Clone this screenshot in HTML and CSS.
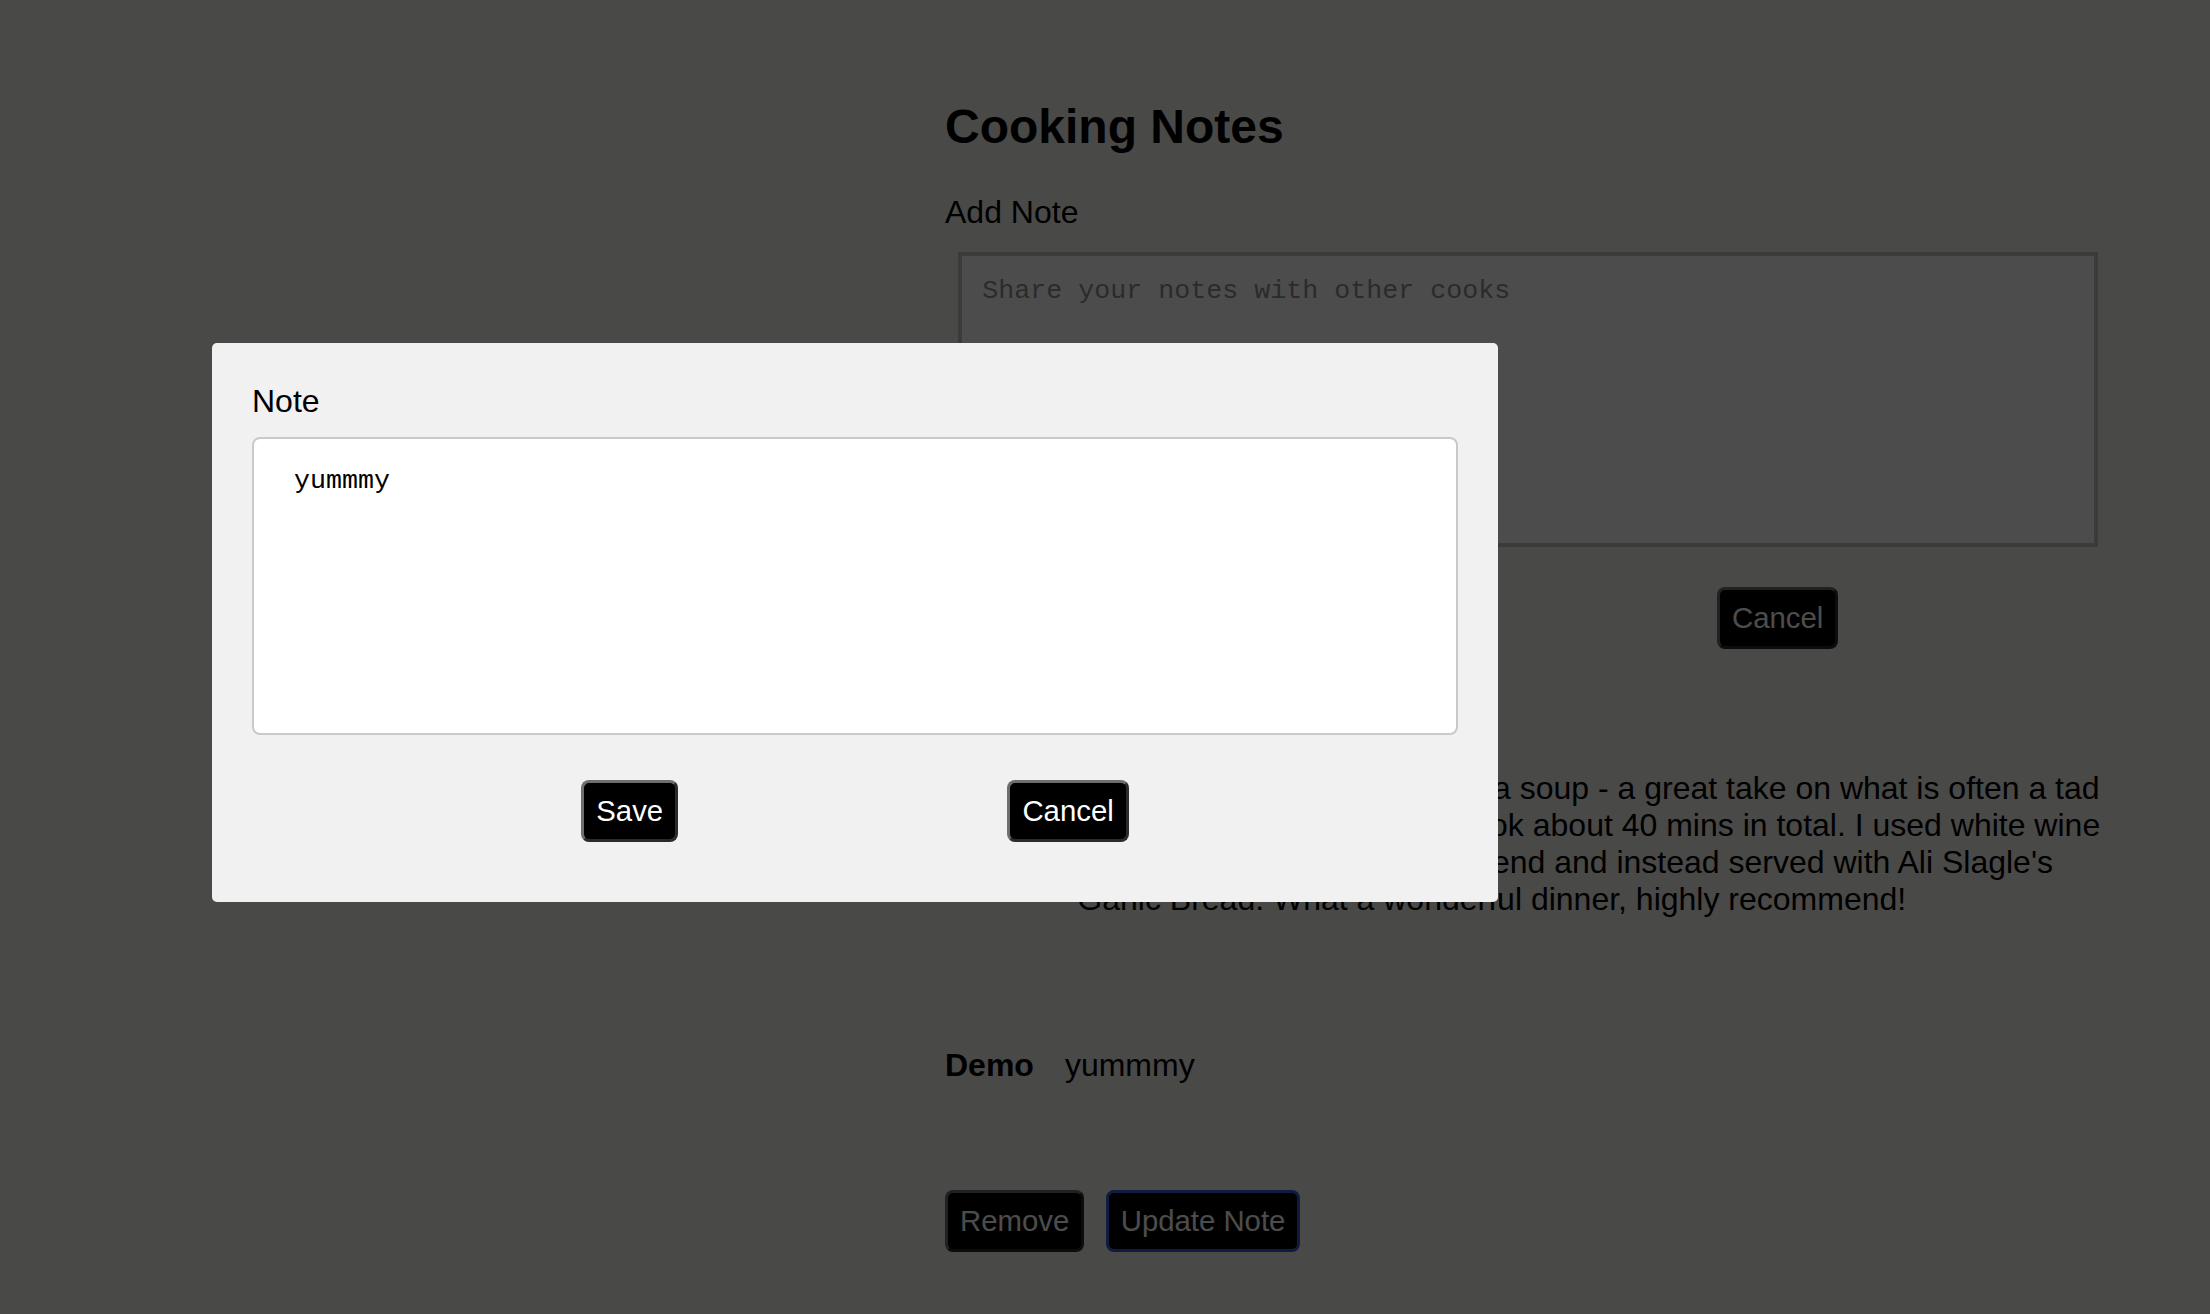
FILE: index.html
```html
<!DOCTYPE html>
<html lang="en">
<head>
<meta charset="utf-8">
<title>Cooking Notes</title>
<link rel="stylesheet" href="styles.css">
</head>
<body>
<div class="page">
  <aside class="side"></aside>
  <main class="notes">
    <h1 class="title">Cooking Notes</h1>
    <label class="add-label" for="new-note">Add Note</label>
    <textarea id="new-note" class="new-note" placeholder="Share your notes with other cooks"></textarea>
    <div class="form-actions">
      <button class="btn" type="button">Share your note</button>
      <button class="btn" type="button">Cancel</button>
    </div>
    <ul class="note-list">
      <li class="note note-first">
        <div class="note-body">
          <strong class="author">Megan</strong>
          <p class="note-text">We really enjoyed this lasagna soup - a great take on what is often a tad heavy dish. Prep and cook took about 40 mins in total. I used white wine and skipped the bread at the end and instead served with Ali Slagle's Garlic Bread. What a wonderful dinner, highly recommend!</p>
        </div>
      </li>
      <li class="note note-own">
        <div class="note-body">
          <strong class="author">Demo</strong>
          <p class="note-text">yummmy</p>
        </div>
        <div class="note-actions">
          <button class="btn" type="button">Remove</button>
          <button class="btn btn-focus" type="button">Update Note</button>
        </div>
      </li>
    </ul>
  </main>
</div>
<div class="overlay"></div>
<div class="modal" role="dialog" aria-label="Edit note">
  <label class="modal-label" for="edit-note">Note</label>
  <textarea id="edit-note" class="edit-note">yummmy</textarea>
  <div class="modal-actions">
    <button class="btn" type="button">Save</button>
    <button class="btn" type="button">Cancel</button>
  </div>
</div>
</body>
</html>
```

FILE: styles.css
```css
* {
  box-sizing: border-box;
}

html, body {
  margin: 0;
  padding: 0;
}

body {
  background: #f3f3f2;
  color: #000;
  font-family: "Liberation Sans", Arial, sans-serif;
  font-size: 32px;
  width: 2210px;
  height: 1314px;
  overflow: hidden;
}

.page {
  display: grid;
  grid-template-columns: 945px 1175px;
}

.notes {
  padding-top: 99.4px;
}

.title {
  margin: 0;
  font-size: 48px;
  font-weight: bold;
  line-height: 56px;
}

.add-label {
  display: block;
  margin-top: 38.5px;
  font-size: 32px;
  line-height: 37px;
}

.new-note {
  display: block;
  margin: 21.6px 0 0 13.33px;
  width: 1140px;
  height: 295px;
  border: 4px solid #c6c6c6;
  border-radius: 0;
  padding: 20px;
  background: #fff;
  font-family: "Liberation Mono", "Courier New", monospace;
  font-size: 26.67px;
  resize: none;
  outline: none;
}

.new-note::placeholder {
  color: #8f8f8f;
}

.form-actions {
  display: flex;
  justify-content: space-evenly;
  margin: 39.5px 0 0 13.33px;
  width: 1140px;
}

.btn {
  font-family: "Liberation Sans", Arial, sans-serif;
  font-size: 29.33px;
  line-height: 34px;
  padding: 11px 12px;
  border: 3px solid;
  border-color: #6e6e6e #2b2b2b #2b2b2b #6e6e6e;
  border-radius: 8px;
  background: #000;
  color: #fff;
  cursor: pointer;
}

.btn-focus {
  border-color: #2e5ed6;
}

.note-list {
  list-style: none;
  margin: 0;
  padding: 0;
}

.note-first {
  margin-top: 121px;
}

.note-own {
  margin-top: 129px;
}

.note-body {
  display: flex;
  align-items: baseline;
  gap: 31px;
}

.author {
  font-weight: bold;
  line-height: 37px;
  flex: none;
}

.note-text {
  margin: 0;
  line-height: 37px;
}

.note-actions {
  display: flex;
  gap: 21.5px;
  margin-top: 105.6px;
}

.overlay {
  position: fixed;
  inset: 0;
  background: rgba(0, 0, 0, 0.7);
}

.modal {
  position: fixed;
  left: 212px;
  top: 343px;
  width: 1286px;
  padding: 40px 40px 60px;
  background: #f1f1f1;
  border-radius: 5px;
}

.modal-label {
  display: block;
  font-size: 32px;
  line-height: 37px;
}

.edit-note {
  display: block;
  margin-top: 17px;
  width: 100%;
  height: 298px;
  border: 2.67px solid #c9c9c9;
  border-radius: 8px;
  padding: 26.67px 40px;
  background: #fff;
  color: #000;
  font-family: "Liberation Mono", "Courier New", monospace;
  font-size: 26.67px;
  resize: none;
  outline: none;
}

.modal-actions {
  display: flex;
  justify-content: space-evenly;
  margin-top: 45px;
}
```
